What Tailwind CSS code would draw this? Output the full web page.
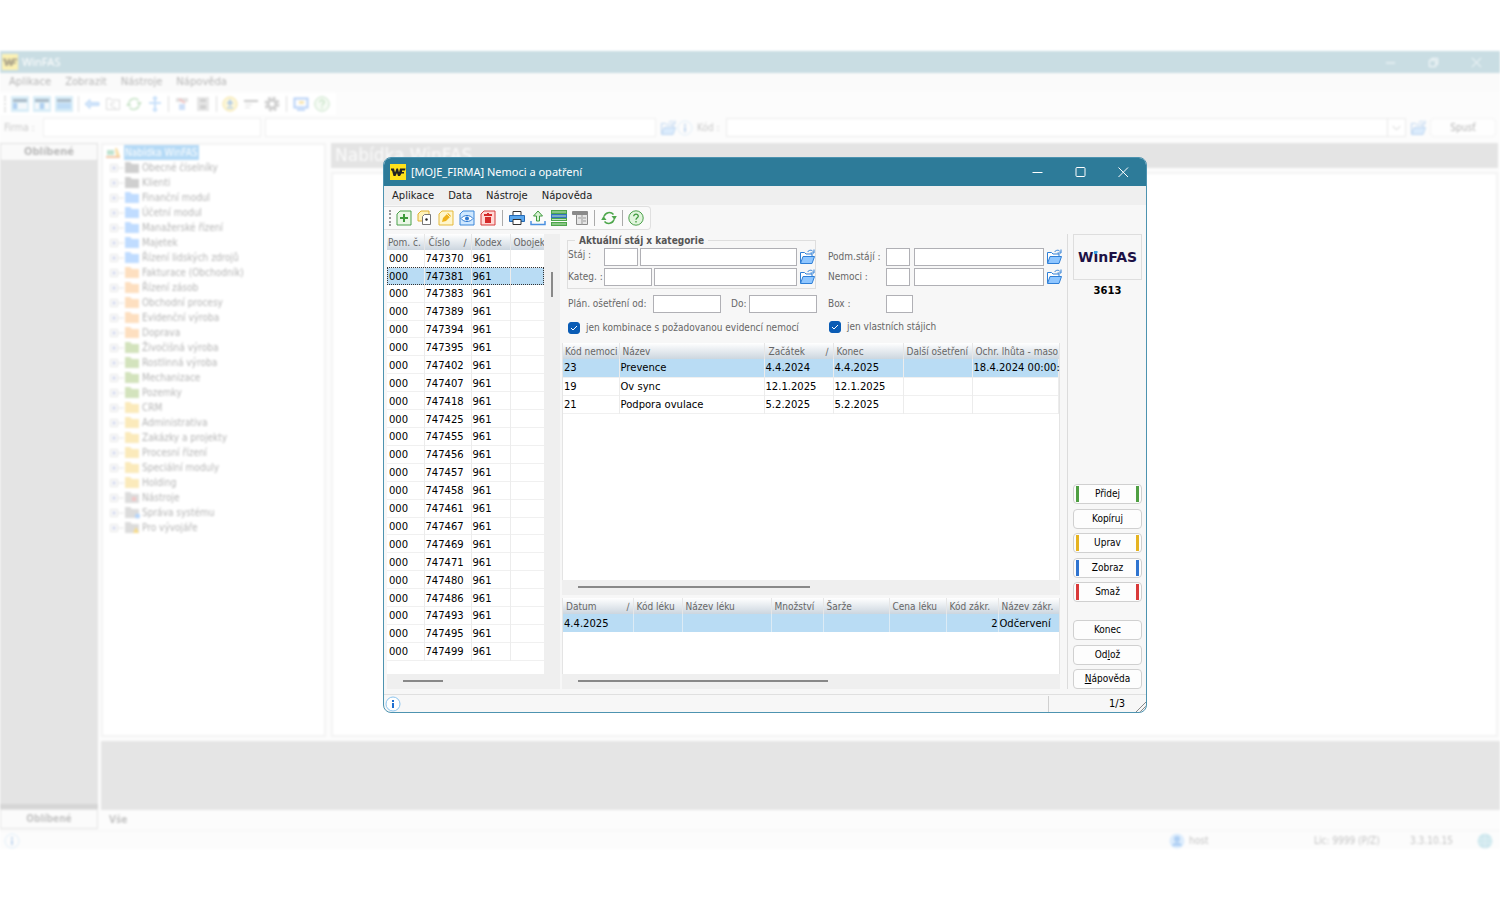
<!DOCTYPE html>
<html lang="cs">
<head>
  <meta charset="UTF-8">
  <meta name="viewport" content="width=device-width, initial-scale=1.0">
  <title>WinFAS - Nemoci a opatření</title>
  <script src="https://cdn.jsdelivr.net/npm/@tailwindcss/browser@4"></script>
</head>
<body class="relative h-screen overflow-hidden bg-white text-[10px] leading-4 font-['DejaVu_Sans_Condensed','DejaVu_Sans','Noto_Sans',sans-serif]">

  <!-- shared icons -->
  <svg class="hidden">
    <symbol id="folder-open" viewBox="0 0 16 16">
      <path d="M1.5 14V3.5h4l1.500 1.500h6V8" fill="#fff" stroke="#2f7fd6" />
      <path d="M1.500 14.500 4 7.500h11.500l-2.500 7z" fill="#8fc6ff" stroke="#2f7fd6" />
      <path d="M8.500 3c1.500-2 4-2.500 5.500-.5M15 .5V4h-3.500" fill="none" stroke="#2f7fd6" />
    </symbol>
    <symbol id="info" viewBox="0 0 16 16">
      <circle cx="8" cy="8" r="7" fill="#fff" stroke="#8cc4ee" />
      <path d="M7 7h2v5H7zM7 4h2v2H7z" fill="#1f6fd0" />
    </symbol>
    <symbol id="help" viewBox="0 0 16 16">
      <circle cx="8" cy="8" r="7.200" fill="#e0f5dc" stroke="#4ba04a" />
      <path d="M5.700 6.300C5.700 3.300 10.400 3.500 10.300 6.200 10.200 7.800 8 7.800 8 9.800M8 11v1.500" fill="none" stroke="#3f9a3e" stroke-width="1.300" />
    </symbol>
    <symbol id="refresh" viewBox="0 0 16 16">
      <path d="M3 6.500A5.500 5.500 0 0 1 12.500 4.500M13 9.500A5.500 5.500 0 0 1 3.500 11.500" fill="none" stroke="#4da64b" stroke-width="1.500" />
      <path d="M10.500 6 15.800 6 13.500 10zM5.500 10 .2 10 2.500 6z" fill="#4da64b" />
    </symbol>
    <symbol id="wf" viewBox="0 0 16 16">
      <path d="M0 0h16v16H0z" fill="#ffe11a" />
      <path d="M1 4.500h3l1 4 1.500-4H8l1 4 1-4h5.500L15 6.500h-3V8h2v1.500h-2.500L10 12H8L7 9l-1.500 3h-2L2 6.500H1z" fill="#222" />
    </symbol>
  </svg>

  <!-- main window, out of focus behind the dialog -->
  <div class="flex h-full flex-col py-[51px] text-[#b5b5b5] blur-[1px]">
    <div class="flex min-h-0 flex-1 flex-col bg-[#fcfcfc]">
      <header class="flex h-[22px] shrink-0 items-center bg-[#c9dde3] pl-0.5 font-['Noto_Sans',sans-serif] text-[11px] text-white">
        <svg class="size-4" viewBox="0 0 16 16"><path d="M0 0h16v16H0z" fill="#fbf1b4" /><path d="M1 4.500h3l1 4 1.500-4H8l1 4 1-4h5.500L15 6.500h-3V8h2v1.500h-2.500L10 12H8L7 9l-1.500 3h-2L2 6.500H1z" fill="#b0a88c" /></svg>
        <span class="ml-1">WinFAS</span>
        <div class="ml-auto flex items-center gap-8 pr-[18px]">
          <svg class="size-[11px]" fill="none" stroke="#fff" viewBox="0 0 12 12"><path d="M1 6.500h10" /></svg>
          <svg class="size-[11px]" fill="none" stroke="#fff" viewBox="0 0 12 12"><path d="M1.500 3.500h7v7h-7zM4 3V1.500h6.500V8H9" /></svg>
          <svg class="size-[11px]" fill="none" stroke="#fff" viewBox="0 0 12 12"><path d="m1 1 10 10M11 1 1 11" /></svg>
        </div>
      </header>
      <nav class="flex h-[18px] shrink-0 items-center gap-[14px] bg-[#fafafa] pl-[9px] font-['DejaVu_Sans',sans-serif]">
        <button>Aplikace</button><button>Zobrazit</button><button>Nástroje</button><button>Nápověda</button>
      </nav>
      <div class="mt-0.5 flex h-[22px] w-[336px] shrink-0 items-center gap-[5px] bg-white pl-1">
        <span class="h-4 border-l-2 border-dotted border-[#ddd]"></span>
        <div class="flex gap-1">
          <svg class="h-4 w-[18px]" viewBox="0 0 18 16"><path d="M0 0h18v16H0z" fill="#d9edf7" /><path d="M2 3h14v3H2z" fill="#aabac7" /><path d="M2 7h4v6H2z" fill="#b0cff0" /><path d="M7 7h9v6H7z" fill="#f4f8fb" /></svg>
          <svg class="h-4 w-[18px]" viewBox="0 0 18 16"><path d="M0 0h18v16H0z" fill="#d9edf7" /><path d="M2 3h14v3H2z" fill="#aabac7" /><path d="M7 7h4v6H7z" fill="#b0cff0" /><path d="M2 7h4v6H2zm10 0h4v6h-4z" fill="#f4f8fb" /></svg>
          <svg class="h-4 w-[18px]" viewBox="0 0 18 16"><path d="M0 0h18v16H0z" fill="#d9edf7" /><path d="M2 3h14v3H2z" fill="#aabac7" /><path d="M2 7h14v6H2z" fill="#bfdcf5" /></svg>
        </div>
        <span class="h-4 w-px bg-[#ddd]"></span>
        <svg class="size-4" viewBox="0 0 16 16"><path d="m1 8 5-4.500V6.500h9v3H6v3z" fill="#d3e6fb" stroke="#bcd8f6" /></svg>
        <svg class="size-4" fill="none" stroke="#dadada" viewBox="0 0 16 16"><path d="M1.500 13.500v-11h4l1 1.500h8v9.500zM6 7h4M6 7v3l5 2" /></svg>
        <svg class="size-4 opacity-30"><use href="#refresh" /></svg>
        <svg class="size-4" fill="none" stroke="#c8e0fa" stroke-width="2" viewBox="0 0 16 16"><path d="M8 1v14M2 7h12M6 3l2-2 2 2M6 13l2 2 2-2" /></svg>
        <span class="h-4 w-px bg-[#ddd]"></span>
        <svg class="size-4" viewBox="0 0 16 16"><path d="M2 2h12v4H2z" fill="#e2e2e2" /><path d="m5 3 6 4" stroke="#f2c2c2" stroke-width="2" /><path d="M5 8h6v6H5z" fill="#cfe0f8" /></svg>
        <svg class="size-4" viewBox="0 0 16 16"><path d="M2 1h12v14H2z" fill="#e6e6e6" /><path d="M5 3h6v3H5zm0 6h6v4H5z" fill="#cfcfcf" /></svg>
        <span class="h-4 w-px bg-[#ddd]"></span>
        <svg class="size-4" viewBox="0 0 16 16"><circle cx="8" cy="8" r="7" fill="#fdf7d8" stroke="#f5e3a0" /><path d="M8 3 4.500 8H7v2h2V8h2.500zM5 11h6v1.500H5z" fill="#b4cde6" /></svg>
        <svg class="size-4" viewBox="0 0 16 16"><path d="M1 4h14v2H1z" fill="#c8c8c8" /><path d="M2 8h7v1H2zm0 3h5v1H2z" fill="#e2e2e2" /></svg>
        <svg class="size-4" viewBox="0 0 16 16"><circle cx="8" cy="8" r="4" fill="none" stroke="#cfcfcf" stroke-width="3" /><circle cx="8" cy="8" r="6.500" fill="none" stroke="#cfcfcf" stroke-width="2" stroke-dasharray="3 2.100" /></svg>
        <span class="mx-px h-4 w-px bg-[#ddd]"></span>
        <svg class="size-4" viewBox="0 0 16 16"><path d="M1.500 2.500h13v9h-13z" fill="#fff" stroke="#b8d2f7" stroke-width="2" /><path d="M6 5h5v3H6z" fill="#f8e6b5" /><path d="M4 13h8v2H4z" fill="#c5daf8" /></svg>
        <svg class="size-4 opacity-30"><use href="#help" /></svg>
      </div>
      <div class="mt-[3px] flex h-[19px] shrink-0 items-center gap-1 pr-1 pl-1 text-[#c9c9c9]">
        <label for="firm" class="w-[35px]">Firma :</label>
        <input id="firm" class="h-full w-[218px] border border-[#efefef] bg-white">
        <input aria-label="Název firmy" class="h-full w-[391px] border border-[#efefef] bg-white">
        <div class="flex gap-px">
          <svg class="size-4 opacity-30"><use href="#folder-open" /></svg>
          <svg class="size-4 opacity-25"><use href="#info" /></svg>
        </div>
        <label for="code" class="w-[25px]">Kód :</label>
        <div class="grid h-full flex-1 grid-cols-[1fr_18px] border border-[#ebebeb] bg-white">
          <select id="code" class="col-span-2 col-start-1 row-start-1 appearance-none"></select>
          <svg class="pointer-events-none col-start-2 row-start-1 h-[17px] w-[18px] border-l border-[#e8e8e8]" fill="none" stroke="#ccc" viewBox="0 0 18 17"><path d="m5 7 4 4 4-4" /></svg>
        </div>
        <svg class="size-4 opacity-30"><use href="#folder-open" /></svg>
        <button class="h-full w-[66px] rounded-sm border border-[#f3f3f3] bg-[#fefefe] text-[#b5b5b5]">Spusť</button>
      </div>
      <div class="mt-1.5 flex min-h-0 flex-1">
        <aside class="mb-px flex w-[98px] shrink-0 flex-col bg-[#e4e4e4]">
          <h2 class="h-[18px] border border-[#e0e0e0] bg-[#fafafa] text-center text-[11px] font-bold text-[#b8b8b8]">Oblíbené</h2>
          <div class="flex-1 border-b-[5px] border-[#d6d6d6]"></div>
          <button class="h-5 border border-[#e4e4e4] bg-[#fbfbfb] font-bold text-[#c4c4c4]">Oblíbené</button>
        </aside>
        <div class="flex min-w-0 flex-1 flex-col pl-[3px]">
          <div class="flex min-h-0 flex-1 gap-[5px] pr-0.5">
            <ul id="tree" class="w-[225px] border-2 border-[#f3f3f3] bg-white pl-[3px]"></ul>
            <div class="flex flex-1 flex-col gap-1">
              <h1 class="h-[25px] bg-[#e4e4e4] pl-1 font-['DejaVu_Sans',sans-serif] text-[17px] leading-[25px] text-[#fbfbfb]">Nabídka WinFAS</h1>
              <div class="flex-1 border-2 border-[#f3f3f3] bg-white"></div>
            </div>
          </div>
          <div class="mt-1 h-[69px] bg-[#e5e5e5]"></div>
          <div class="flex h-5 items-center px-2 font-bold text-[#c4c4c4]"><button>Vše</button></div>
        </div>
      </div>
      <footer class="flex h-[19px] shrink-0 items-center border-t border-[#f6f6f6] pt-0.5 pr-[7px] pl-1 text-[#c4c4c4]">
        <svg class="mr-auto size-4 opacity-25"><use href="#info" /></svg>
        <svg class="size-4" viewBox="0 0 16 16"><circle cx="8" cy="8" r="7.500" fill="#dcecfc" /><circle cx="8" cy="6" r="3" fill="#b0d0f4" /><path d="M3 13c1-5 9-5 10 0z" fill="#b0d0f4" /></svg>
        <span class="ml-1 w-[125px]">host</span>
        <span class="w-24">Lic: 9999 (P/Z)</span>
        <span class="w-[67px]">3.3.10.15</span>
        <svg class="size-4" viewBox="0 0 16 16"><circle cx="8" cy="8" r="7.500" fill="#cfe8ee" /><path d="M1 6h14M1 10h14M8 1v14" stroke="#dff0f4" /></svg>
      </footer>
    </div>
  </div>

  <!-- dialog window -->
  <section class="absolute top-[157px] left-[383px] flex w-[764px] flex-col overflow-hidden rounded-lg border border-[#4d93b0] bg-[#f7f7f7] text-[#666]">
    <header class="flex h-7 items-center bg-[#2d7b99] pr-[17px] pl-1.5 font-['Noto_Sans',sans-serif] text-[11px] text-white">
      <svg class="size-4"><use href="#wf" /></svg>
      <h2 class="ml-[5px]">[MOJE_FIRMA] Nemoci a opatření</h2>
      <div class="ml-auto flex gap-8">
        <button aria-label="Minimalizovat"><svg class="size-[11px]" fill="none" stroke="#fff" viewBox="0 0 11 11"><path d="M.5 5.500h10" /></svg></button>
        <button aria-label="Maximalizovat"><svg class="size-[11px]" fill="none" stroke="#fff" viewBox="0 0 11 11"><rect x="1" y=".5" width="9" height="9" rx="1" /></svg></button>
        <button aria-label="Zavřít"><svg class="size-[11px]" fill="none" stroke="#fff" viewBox="0 0 11 11"><path d="m.5.5 9.500 9.500M10 .5.500 10" /></svg></button>
      </div>
    </header>
    <nav class="flex h-[19px] items-center gap-[14px] bg-[#efefef] pl-2 font-['DejaVu_Sans',sans-serif] text-[#222]">
      <button>Aplikace</button><button>Data</button><button>Nástroje</button><button>Nápověda</button>
    </nav>
    <div class="mt-px flex h-6 w-[267px] items-center gap-[5px] rounded-r border border-l-0 border-[#e0e0e0] bg-[#fafafa] pl-[5px]">
      <span class="h-4 border-l-2 border-dotted border-[#999]"></span>
      <button aria-label="Přidej"><svg class="size-4" viewBox="0 0 16 16"><path d="M4 1h11v14H1V4z" fill="#eaf7e6" stroke="#4ba04a" /><path d="M8 4v8M4 8h8" stroke="#3d9a3b" stroke-width="2" /></svg></button>
      <button aria-label="Kopíruj"><svg class="size-4" viewBox="0 0 16 16"><path d="M4 1h8v10H1V4z" fill="#fff2b8" stroke="#e0b030" /><path d="M7.500 4.500h6v10h-8v-8z" fill="#fff" stroke="#777" /><circle cx="9.500" cy="9.500" r="1.200" fill="#222" /></svg></button>
      <button aria-label="Uprav"><svg class="size-4" viewBox="0 0 16 16"><path d="M4 1h11v14H1V4z" fill="#fff6cc" stroke="#e5b93a" /><path d="m4 12 1-4 5-5 3 3-5 5z" fill="#efb21c" /><path d="m9 4 3 3" stroke="#fff2b8" /></svg></button>
      <button aria-label="Zobraz"><svg class="size-4" viewBox="0 0 16 16"><path d="M4 1h11v14H1V4z" fill="#cfe8ff" stroke="#3b86d8" /><path d="M2 8.500c3-4 9-4 12 0-3 4-9 4-12 0z" fill="#fff" stroke="#2c78d0" /><circle cx="8" cy="8.500" r="2" fill="#2c78d0" /></svg></button>
      <button aria-label="Smaž"><svg class="size-4" viewBox="0 0 16 16"><path d="M4 1h11v14H1V4z" fill="#ffd9d6" stroke="#d63a3a" /><path d="M4 4h8v2H4zm1 3h6v6H5zm2-4h2v1H7z" fill="#d42a2a" /></svg></button>
      <span class="mx-px h-4 w-px bg-[#aaa]"></span>
      <button aria-label="Tisk"><svg class="size-4" viewBox="0 0 16 16"><path d="M4 1.500h8V6H4z" fill="#fff" stroke="#333" /><path d="M.5 5.500h15v6H.5z" fill="#5aa7ee" stroke="#2468b4" /><path d="M4 9.500h8v5H4z" fill="#fff" stroke="#333" /></svg></button>
      <button aria-label="Export"><svg class="size-4" viewBox="0 0 16 16"><path d="M8 1 3.500 6H6.500v5h3V6h3z" fill="#d9f2d4" stroke="#3f9a3e" /><path d="M1 11v3.500h14V11" fill="none" stroke="#4a90e0" stroke-width="1.500" /></svg></button>
      <button aria-label="Seznam"><svg class="size-4" viewBox="0 0 16 16"><path d="M0 0h16v4H0zM0 8h16v3H0zM0 12h16v4H0z" fill="#4da64b" /><path d="M0 4h16v4H0z" fill="#3274c0" /><path d="M1 2h14M1 6h14M1 9.500h14M1 14h14" stroke="#c4e6c0" /></svg></button>
      <button aria-label="Formulář"><svg class="size-4" viewBox="0 0 16 16"><path d="M.5 1.500h15v3H.5zM4.500 4.500h11v10h-11z" fill="#e6e6e6" stroke="#8a8a8a" /><path d="M1 3h14" stroke="#8a8a8a" stroke-width="2" /><path d="M10 5v10M6 8h3M11 8h3M11 11h3" stroke="#999" /></svg></button>
      <span class="mx-px h-4 w-px bg-[#aaa]"></span>
      <button aria-label="Obnovit"><svg class="size-4"><use href="#refresh" /></svg></button>
      <span class="h-4 w-px bg-[#aaa]"></span>
      <button aria-label="Nápověda"><svg class="size-4"><use href="#help" /></svg></button>
    </div>

    <div class="mt-1 flex">
      <!-- animals -->
      <div class="ml-[3px] w-[173px] bg-[#efefef]">
        <div class="flex h-[440px]">
          <div class="w-[157px] overflow-hidden bg-white">
            <table class="h-[427px] w-full table-fixed border-collapse">
              <colgroup><col class="w-[37px]"><col class="w-[47px]"><col class="w-[39px]"><col></colgroup>
              <thead class="bg-linear-to-b from-white to-[#ccd6df] leading-[14px]">
                <tr class="h-4 text-left whitespace-nowrap">
                  <th class="h-4 border-r border-[#e6e6e6] p-0 pt-0.5 pl-px font-normal">Pom. č.</th>
                  <th class="h-4 border-r border-[#e6e6e6] p-0 px-1 pt-0.5 font-normal"><span class="flex justify-between">Číslo <span>∕</span></span></th>
                  <th class="h-4 border-r border-[#e6e6e6] p-0 pt-0.5 pl-[3px] font-normal">Kodex</th>
                  <th class="h-4 p-0 pt-0.5 pl-[3px] font-normal">Obojek</th>
                </tr>
              </thead>
              <tbody id="animals" class="leading-[14px] font-['DejaVu_Sans',sans-serif] text-black"></tbody>
            </table>
          </div>
          <div class="w-4 pt-[38px]"><div class="ml-[7px] h-[25px] w-0.5 bg-[#888]"></div></div>
        </div>
        <div class="h-[15px] pt-1.5"><div class="ml-4 h-0.5 w-10 bg-[#888]"></div></div>
      </div>

      <!-- filter and grids -->
      <div class="ml-0.5 w-[498px]">
        <form class="flex h-[109px] gap-[11px] pl-[5px]">
          <div class="w-[250px]">
            <fieldset class="relative mt-1.5 h-[49px] w-[249px] border border-[#dedede]">
              <legend class="absolute -top-[7px] left-[7px] bg-[#f7f7f7] px-1 leading-[14px] font-bold text-[#555]">Aktuální stáj x kategorie</legend>
              <div class="mt-[7px] flex flex-col gap-0.5">
                <div class="flex h-[18px] items-center gap-0.5">
                  <label for="stable" class="w-[34px] self-start leading-[14px]">Stáj :</label>
                  <input id="stable" class="h-full w-[34px] border border-[#b0b0b5] bg-white">
                  <input aria-label="Název stáje" class="h-full min-w-0 flex-1 border border-[#b0b0b5] bg-white">
                  <button type="button" aria-label="Vybrat stáj"><svg class="size-4"><use href="#folder-open" /></svg></button>
                </div>
                <div class="flex h-[18px] items-center gap-0.5">
                  <label for="category" class="w-[34px] whitespace-nowrap">Kateg. :</label>
                  <input id="category" class="h-full w-12 border border-[#b0b0b5] bg-white">
                  <input aria-label="Název kategorie" class="h-full min-w-0 flex-1 border border-[#b0b0b5] bg-white">
                  <button type="button" aria-label="Vybrat kategorii"><svg class="size-4"><use href="#folder-open" /></svg></button>
                </div>
              </div>
            </fieldset>
            <div class="mt-1.5 flex h-[18px] items-center">
              <label for="from" class="w-[86px] pl-px whitespace-nowrap">Plán. ošetření od:</label>
              <input id="from" class="h-full w-[68px] border border-[#b0b0b5] bg-white">
              <label for="to" class="ml-2.5 w-[18px]">Do:</label>
              <input id="to" class="h-full w-[68px] border border-[#b0b0b5] bg-white">
            </div>
            <label class="mt-[7px] flex items-center gap-1.5 pl-px whitespace-nowrap">
              <span class="grid">
                <input type="checkbox" checked class="col-start-1 row-start-1 size-3 appearance-none rounded-[3px] border border-[#888] checked:border-[#0a5cb5] checked:bg-[#0a5cb5]">
                <svg class="pointer-events-none col-start-1 row-start-1 size-3" fill="none" stroke="#fff" viewBox="0 0 12 12"><path d="m3 6 2 2 4-4" /></svg>
              </span>
              jen kombinace s požadovanou evidencí nemocí
            </label>
          </div>
          <div class="w-[234px]">
            <div class="mt-[14px] flex h-[18px] items-center">
              <label for="substable" class="w-[58px] whitespace-nowrap">Podm.stájí :</label>
              <input id="substable" class="h-full w-6 border border-[#b0b0b5] bg-white">
              <input aria-label="Název podmnožiny stájí" class="mr-0.5 ml-1 h-full w-[130px] border border-[#b0b0b5] bg-white">
              <button type="button" aria-label="Vybrat podmnožinu"><svg class="size-4"><use href="#folder-open" /></svg></button>
            </div>
            <div class="mt-0.5 flex h-[18px] items-center">
              <label for="illness" class="w-[58px]">Nemoci :</label>
              <input id="illness" class="h-full w-6 border border-[#b0b0b5] bg-white">
              <input aria-label="Název nemoci" class="mr-0.5 ml-1 h-full w-[130px] border border-[#b0b0b5] bg-white">
              <button type="button" aria-label="Vybrat nemoc"><svg class="size-4"><use href="#folder-open" /></svg></button>
            </div>
            <div class="mt-[9px] flex h-[18px] items-center">
              <label for="box" class="w-[58px]">Box :</label>
              <input id="box" class="h-full w-[27px] border border-[#b0b0b5] bg-white">
            </div>
            <label class="mt-1.5 flex items-center gap-1.5 pl-px whitespace-nowrap">
              <span class="grid">
                <input type="checkbox" checked class="col-start-1 row-start-1 size-3 appearance-none rounded-[3px] border border-[#888] checked:border-[#0a5cb5] checked:bg-[#0a5cb5]">
                <svg class="pointer-events-none col-start-1 row-start-1 size-3" fill="none" stroke="#fff" viewBox="0 0 12 12"><path d="m3 6 2 2 4-4" /></svg>
              </span>
              jen vlastních stájich
            </label>
          </div>
        </form>

        <div class="h-[237px] border-x border-[#e4e4e4] bg-white">
          <table class="w-full table-fixed border-collapse">
            <colgroup><col class="w-14"><col class="w-[145px]"><col class="w-[69px]"><col class="w-[70px]"><col class="w-[69px]"><col></colgroup>
            <thead class="bg-linear-to-b from-white to-[#ccd6df] leading-[14px]">
              <tr class="h-4 text-left whitespace-nowrap">
                <th class="border-r border-[#e6e6e6] p-0 pt-0.5 pl-0.5 font-normal">Kód nemoci</th>
                <th class="border-r border-[#e6e6e6] p-0 pt-0.5 pl-[3px] font-normal">Název</th>
                <th class="border-r border-[#e6e6e6] p-0 px-1 pt-0.5 font-normal"><span class="flex justify-between">Začátek <span>∕</span></span></th>
                <th class="border-r border-[#e6e6e6] p-0 pt-0.5 pl-[3px] font-normal">Konec</th>
                <th class="border-r border-[#e6e6e6] p-0 pt-0.5 pl-[3px] font-normal">Další ošetření</th>
                <th class="p-0 pt-0.5 pl-[3px] font-normal">Ochr. lhůta - maso</th>
              </tr>
            </thead>
            <tbody id="illnesses" class="leading-[14px] font-['DejaVu_Sans',sans-serif] text-black"></tbody>
          </table>
        </div>
        <div class="h-[15px] bg-[#efefef] pt-1.5"><div class="ml-4 h-0.5 w-[232px] bg-[#888]"></div></div>

        <div class="mt-[3px] h-[76px] border-x border-[#e4e4e4] bg-white">
          <table class="w-full table-fixed border-collapse">
            <colgroup><col class="w-[70px]"><col class="w-[49px]"><col class="w-[89px]"><col class="w-[52px]"><col class="w-[66px]"><col class="w-[57px]"><col class="w-[52px]"><col></colgroup>
            <thead class="bg-linear-to-b from-white to-[#ccd6df] leading-[14px]">
              <tr class="h-4 text-left whitespace-nowrap">
                <th class="border-r border-[#e6e6e6] p-0 px-[3px] pt-0.5 font-normal"><span class="flex justify-between">Datum <span>∕</span></span></th>
                <th class="border-r border-[#e6e6e6] p-0 pt-0.5 pl-[3px] font-normal">Kód léku</th>
                <th class="border-r border-[#e6e6e6] p-0 pt-0.5 pl-[3px] font-normal">Název léku</th>
                <th class="border-r border-[#e6e6e6] p-0 pt-0.5 pl-[3px] font-normal">Množství</th>
                <th class="border-r border-[#e6e6e6] p-0 pt-0.5 pl-[3px] font-normal">Šarže</th>
                <th class="border-r border-[#e6e6e6] p-0 pt-0.5 pl-[3px] font-normal">Cena léku</th>
                <th class="border-r border-[#e6e6e6] p-0 pt-0.5 pl-[3px] font-normal">Kód zákr.</th>
                <th class="p-0 pt-0.5 pl-[3px] font-normal">Název zákr.</th>
              </tr>
            </thead>
            <tbody class="leading-[14px] font-['DejaVu_Sans',sans-serif] text-black">
              <tr class="h-[18px] bg-[#b9dcf4]">
                <td class="border-r border-[#dcebf5] p-0 pt-px pl-px">4.4.2025</td>
                <td class="border-r border-[#dcebf5]"></td>
                <td class="border-r border-[#dcebf5]"></td>
                <td class="border-r border-[#dcebf5]"></td>
                <td class="border-r border-[#dcebf5]"></td>
                <td class="border-r border-[#dcebf5]"></td>
                <td class="border-r border-[#dcebf5] p-0 pt-px text-right">2</td>
                <td class="p-0 pt-px pl-px">Odčervení</td>
              </tr>
            </tbody>
          </table>
        </div>
        <div class="h-[15px] bg-[#efefef] pt-1.5"><div class="ml-4 h-0.5 w-[250px] bg-[#888]"></div></div>
      </div>

      <!-- actions -->
      <aside class="ml-[7px] flex flex-1 flex-col border-l border-[#dcdcdc] pr-1 pl-[5px] text-black">
        <div class="flex h-[46px] items-center justify-center border border-[#dedede] font-['DejaVu_Sans',sans-serif] text-[14px] font-bold text-[#1d1145]">
          W<span class="relative">i<span class="absolute top-0.5 left-px size-[3px] bg-[#3fa0e0]"></span></span>nFAS
        </div>
        <p class="mt-[3px] text-center font-['DejaVu_Sans',sans-serif] font-bold">3613</p>
        <div class="mt-auto flex h-[118px] flex-col justify-between">
          <button class="flex h-5 items-center justify-between rounded border border-[#d0d0d0] bg-[#fdfdfd] px-0.5"><span class="h-4 w-[3px] bg-[#4f9f42]"></span>Přidej<span class="h-4 w-[3px] bg-[#4f9f42]"></span></button>
          <button class="h-5 rounded border border-[#d0d0d0] bg-[#fdfdfd]">Kopíruj</button>
          <button class="flex h-5 items-center justify-between rounded border border-[#d0d0d0] bg-[#fdfdfd] px-0.5"><span class="h-4 w-[3px] bg-[#e5b322]"></span>Uprav<span class="h-4 w-[3px] bg-[#e5b322]"></span></button>
          <button class="flex h-5 items-center justify-between rounded border border-[#d0d0d0] bg-[#fdfdfd] px-0.5"><span class="h-4 w-[3px] bg-[#2f74d0]"></span>Zobraz<span class="h-4 w-[3px] bg-[#2f74d0]"></span></button>
          <button class="flex h-5 items-center justify-between rounded border border-[#d0d0d0] bg-[#fdfdfd] px-0.5"><span class="h-4 w-[3px] bg-[#d93a3a]"></span>Smaž<span class="h-4 w-[3px] bg-[#d93a3a]"></span></button>
        </div>
        <div class="mt-[18px] flex h-[69px] flex-col justify-between">
          <button class="h-5 rounded border border-[#d0d0d0] bg-[#fdfdfd]">Konec</button>
          <button class="h-5 rounded border border-[#d0d0d0] bg-[#fdfdfd]">Od<u>l</u>ož</button>
          <button class="h-5 rounded border border-[#d0d0d0] bg-[#fdfdfd]"><u>N</u>ápověda</button>
        </div>
      </aside>
    </div>

    <footer class="mt-[5px] flex h-[18px] items-center border-t border-[#e0e0e0] pl-px">
      <svg class="size-4"><use href="#info" /></svg>
      <div class="ml-auto flex h-4 w-[98px] items-center justify-end border-l border-[#d0d0d0]">
        <span class="pr-[11px] text-[11px] text-black">1/3</span>
        <svg class="size-[10px] self-end" fill="none" stroke="#888" viewBox="0 0 10 10"><path d="m0 10L10 0M4 10l6-6" /></svg>
      </div>
    </footer>
  </section>

  <script>
    const modules = [
      ['Obecné číselníky', '#cfcfcf'], ['Klienti', '#cfcfcf'],
      ['Finanční modul', '#c0dcff'], ['Účetní modul', '#c0dcff'], ['Manažerské řízení', '#c0dcff'], ['Majetek', '#c0dcff'], ['Řízení lidských zdrojů', '#c0dcff'],
      ['Fakturace (Obchodník)', '#fddfc0'], ['Řízení zásob', '#fddfc0'], ['Obchodní procesy', '#fddfc0'], ['Evidenční výroba', '#fddfc0'], ['Doprava', '#fddfc0'],
      ['Živočišná výroba', '#d3e3bd'], ['Rostlinná výroba', '#d3e3bd'], ['Mechanizace', '#d3e3bd'], ['Pozemky', '#d3e3bd'],
      ['CRM', '#fbeabb'], ['Administrativa', '#fbeabb'], ['Zakázky a projekty', '#fbeabb'], ['Procesní řízení', '#fbeabb'], ['Speciální moduly', '#fbeabb'], ['Holding', '#fbeabb'],
      ['Nástroje', '#dcdcdc', '<path stroke="none" d="M8 6h4v4H8z" fill="#f3c5c5" />'],
      ['Správa systému', '#dcdcdc', '<circle stroke="none" cx="13.500" cy="10" r="2.500" fill="#b5d5fa" />'],
      ['Pro vývojáře', '#dcdcdc', '<path stroke="none" d="m12 6 3 6H9z" fill="#f8dc8c" />']
    ];

    const root = `
      <li class="flex h-[15px] items-center gap-1">
        <svg class="h-3 w-[14px]" viewBox="0 0 14 12"><path d="M1 3h7v5H1z" fill="#bfe3d0" /><path d="M9 1h2l3 8h-4z" fill="#f8dfa8" /><path d="M0 9h14v2H0z" fill="#f3c9a8" /></svg>
        <span class="bg-[#b5daf6] px-px leading-[15px] text-white">Nabídka WinFAS</span>
      </li>`;

    document.getElementById('tree').innerHTML = root + modules.map(([name, color, badge = '']) => `
      <li class="flex h-[15px] items-center pl-1 leading-[15px]">
        <svg class="h-[15px] w-[14px]" fill="none" stroke="#e4e4e4" viewBox="0 0 14 15"><path d="M.5 4.500h7v7h-7zM8 8h6" /><path d="M2 8h4M4 6v4" stroke="#c0c8e4" /></svg>
        <svg class="mr-0.5 h-[13px] w-4" viewBox="0 0 16 13"><path d="M1 1h5l2 2h7v9H1z" fill="${color}" />${badge}</svg>
        ${name}
      </li>`).join('');

    const animals = [747370, 747381, 747383, 747389, 747394, 747395, 747402, 747407, 747418, 747425, 747455, 747456,
      747457, 747458, 747461, 747467, 747469, 747471, 747480, 747486, 747493, 747495, 747499];

    document.getElementById('animals').innerHTML = animals.map((num, i) => `
      <tr class="${i === 1 ? 'bg-[#b9dcf4] outline-1 -outline-offset-1 outline-dotted outline-[#333]' : 'border-b border-[#f0f0f0]'}">
        <td class="border-r border-[#ececec] p-0 pt-0.5 pl-0.5">000</td>
        <td class="border-r border-[#ececec] p-0 pt-0.5 pl-px">${num}</td>
        <td class="border-r border-[#ececec] p-0 pt-0.5 pl-px">961</td>
        <td></td>
      </tr>`).join('');

    const illnesses = [
      ['23', 'Prevence', '4.4.2024', '4.4.2025', '', '18.4.2024 00:00:'],
      ['19', 'Ov sync', '12.1.2025', '12.1.2025', '', ''],
      ['21', 'Podpora ovulace', '5.2.2025', '5.2.2025', '', '']
    ];

    document.getElementById('illnesses').innerHTML = illnesses.map((row, i) => `
      <tr class="h-[18px] border-b border-[#f0f0f0] ${i === 0 ? 'bg-[#b9dcf4]' : ''}">
        ${row.map(cell => `<td class="border-r border-[#ececec] p-0 pt-px pl-px whitespace-nowrap">${cell}</td>`).join('')}
      </tr>`).join('');
  </script>
</body>
</html>
